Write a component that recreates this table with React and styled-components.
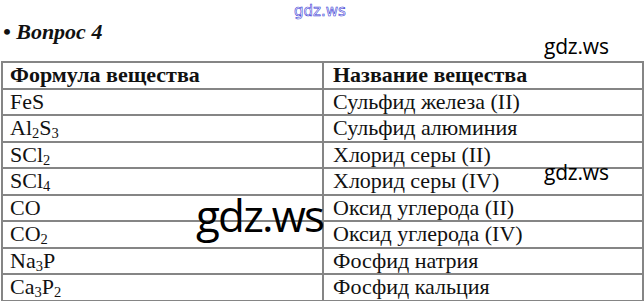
import React from "react";
import styled, { createGlobalStyle } from "styled-components";

const Global = createGlobalStyle`
  html, body { margin: 0; padding: 0; background: #fff; }
  body { width: 644px; height: 301px; overflow: hidden; }
`;

const Page = styled.div`
  position: relative;
  width: 644px;
  height: 301px;
  background: #fff;
  font-family: "Liberation Serif", "Times New Roman", serif;
  color: #111;
`;

const Title = styled.div`
  height: 61px;
  box-sizing: border-box;
  padding: 20px 0 0 3px;
  font-size: 22px;
  line-height: 24px;
  font-weight: bold;
  font-style: italic;
`;

const Table = styled.table`
  margin-left: 1px;
  width: 641px;
  border-collapse: collapse;
  table-layout: fixed;
  font-size: 22px;
`;

const Cell = styled.td`
  height: 24.5px;
  padding: 0 0 0 ${(p) => (p.$right ? 9 : 7)}px;
  border: 2px solid #858585;
  line-height: 24px;
  font-weight: ${(p) => (p.$head ? "bold" : "normal")};
  white-space: nowrap;
  overflow: hidden;
  vertical-align: middle;
`;

const Sub = styled.sub`
  font-size: 0.66em;
  vertical-align: -0.22em;
  line-height: 0;
`;

const Mark = styled.div`
  position: absolute;
  left: ${(p) => p.$x}px;
  top: ${(p) => p.$y}px;
  font-family: "Open Sans", "Noto Sans", sans-serif;
  font-size: ${(p) => p.$size}px;
  font-weight: ${(p) => p.$weight || 400};
  line-height: 1;
  color: #000;
  letter-spacing: ${(p) => p.$ls || 0}px;
`;

const BlueMark = styled(Mark)`
  color: #fff;
  -webkit-text-stroke: 0.6px #3b3bd6;
  font-family: "DejaVu Sans", sans-serif;
`;

const rows = [
  [<>FeS</>, "Сульфид железа (II)"],
  [<>Al<Sub>2</Sub>S<Sub>3</Sub></>, "Сульфид алюминия"],
  [<>SCl<Sub>2</Sub></>, "Хлорид серы (II)"],
  [<>SCl<Sub>4</Sub></>, "Хлорид серы (IV)"],
  [<>CO</>, "Оксид углерода (II)"],
  [<>CO<Sub>2</Sub></>, "Оксид углерода (IV)"],
  [<>Na<Sub>3</Sub>P</>, "Фосфид натрия"],
  [<>Ca<Sub>3</Sub>P<Sub>2</Sub></>, "Фосфид кальция"],
];

export default function App() {
  return (
    <Page>
      <Global />
      <Title>• Вопрос 4</Title>
      <Table>
        <colgroup>
          <col style={{ width: "321px" }} />
          <col style={{ width: "320px" }} />
        </colgroup>
        <tbody>
          <tr>
            <Cell $head>Формула вещества</Cell>
            <Cell $head $right>Название вещества</Cell>
          </tr>
          {rows.map((r, i) => (
            <tr key={i}>
              <Cell>{r[0]}</Cell>
              <Cell $right>{r[1]}</Cell>
            </tr>
          ))}
        </tbody>
      </Table>
      <BlueMark $x={294} $y={4} $size={15}>gdz.ws</BlueMark>
      <Mark $x={544} $y={36} $size={21} $ls={-0.2}>gdz.ws</Mark>
      <Mark $x={544} $y={162} $size={21} $ls={-0.2}>gdz.ws</Mark>
      <Mark $x={196} $y={193} $size={44} $weight={500} $ls={-1.8}>gdz.ws</Mark>
    </Page>
  );
}
